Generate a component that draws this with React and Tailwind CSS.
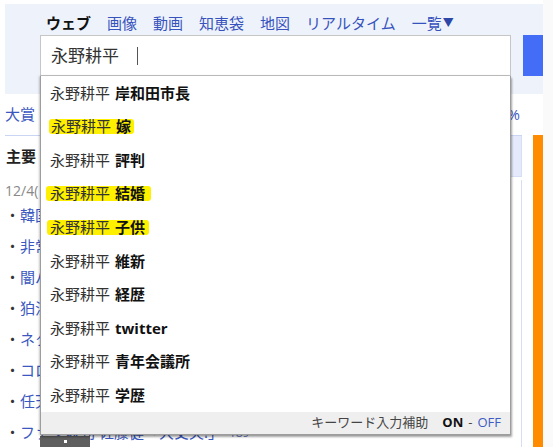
import React from "react";

const items = [
  { s: "岸和田市長" },
  { s: "嫁", hl: true, hlc: "-ml-[1px] pl-[2px] pr-[3px]" },
  { s: "評判" },
  { s: "結婚", hl: true, hlc: "-ml-[4px] pl-[4px] pr-[6px]" },
  { s: "子供", hl: true, hlc: "-ml-[3px] pl-[3px] pr-[4px]" },
  { s: "維新" },
  { s: "経歴" },
  { s: "twitter" },
  { s: "青年会議所" },
  { s: "学歴" },
];

const news = ["韓国", "非常", "闇バ", "狛江", "ネク", "コロ", "任天"];

function Row({ it }) {
  const content = (
    <>
      <span className="text-[#333]">永野耕平</span>
      <span className="ml-[5px] font-bold text-[#111]">{it.s}</span>
    </>
  );
  return (
    <div className="flex h-[33.6px] items-center pl-[9px] text-[15px]">
      {it.hl ? (
        <span className={`inline-flex h-[15px] items-center rounded-[3px] bg-[#fff000] leading-[15px] ${it.hlc}`}>{content}</span>
      ) : (
        content
      )}
    </div>
  );
}

export default function App() {
  return (
    <div className="relative h-[447px] w-[553px] overflow-hidden bg-white font-['Open_Sans','Noto_Sans_CJK_JP',sans-serif]">
      <div className="flex h-full">
        <div className="w-[5px] shrink-0 bg-white" />
        <div className="flex w-[538px] shrink-0 flex-col">
          <div className="h-[4px] shrink-0 bg-white" />
          {/* header */}
          <div className="h-[90px] shrink-0 bg-[#eef2fb] pt-[9px]">
            <div className="flex h-[20px] items-center gap-[16px] pl-[41px] text-[15px] leading-[20px] text-[#3653bd]">
              <span className="font-bold text-[#111]">ウェブ</span>
              <span>画像</span>
              <span>動画</span>
              <span>知恵袋</span>
              <span>地図</span>
              <span>リアルタイム</span>
              <span className="flex items-center">一覧<span className="ml-[1px] text-[11px] text-[#2c47a8]">▼</span></span>
            </div>
            <div className="mt-[2px] flex">
              <div className="ml-[35px] flex h-[41px] w-[471px] items-center border border-[#c6c6c6] bg-white pl-[10px] text-[17px] text-[#333]">
                <span>永野耕平</span>
                <span className="ml-[18px] h-[18px] w-[1px] bg-[#555]" />
              </div>
              <div className="ml-[12px] h-[41px] w-[20px] bg-[#436cf7]" />
            </div>
          </div>
          {/* body */}
          <div className="flex shrink-0">
            <div className="w-[517px] shrink-0">
              <div className="flex h-[41px] items-center justify-between pr-[2px] text-[15px] text-[#3b57c0]">
                <span>大賞</span>
                <span>%</span>
              </div>
              <div className="flex h-[42px] border-t border-[#c9d5f2]">
                <div className="flex w-[60px] items-center pl-[1px] text-[15px] font-bold text-[#222]">主要</div>
                <div className="flex-1 border-r border-b border-[#d5def5] bg-[#e4eafb]" />
              </div>
              <div className="border-r border-[#d5def5]">
                <div className="mt-[3px] flex h-[20px] items-center text-[14px] text-[#888]">12/4(</div>
                {news.map((n) => (
                  <div key={n} className="flex h-[31px] items-center text-[15px] text-[#3b57c0]">
                    <span className="text-[#333]">・</span>
                    <span>{n}</span>
                  </div>
                ))}
                <div className="flex h-[31px] items-center whitespace-nowrap text-[15px] text-[#3b57c0]">
                  <span className="text-[#333]">・</span>
                  <span>ファン殺到 佐藤健「大丈夫!」</span>
                  <span className="ml-[6px] text-[12px] text-[#6a7fc8]">189</span>
                </div>
              </div>
            </div>
            <div className="w-[11px] shrink-0" />
            <div className="mt-[41px] h-[400px] w-[10px] shrink-0 bg-[#ff8c00]" />
          </div>
        </div>
        <div className="w-[10px] shrink-0 bg-[#fafafa]" />
      </div>

      {/* page-top button peeking under dropdown */}
      <div className="absolute left-[40px] top-[436px] flex h-[12px] w-[50px] justify-center bg-[#5f5f5f]">
        <div className="mt-[4px] h-[3px] w-[3px] bg-white" />
      </div>

      {/* suggestion dropdown */}
      <div className="absolute left-[40px] top-[76px] w-[471px] border-x border-b border-[#9d9d9d] bg-white shadow-[1px_2px_2px_rgba(0,0,0,0.35),-1px_0_2px_rgba(0,0,0,0.2)]">
        {items.map((it) => (
          <Row key={it.s} it={it} />
        ))}
        <div className="flex h-[22px] items-center justify-end bg-[#efefef] pr-[9px] text-[13px]">
          <span className="text-[#444]">キーワード入力補助</span>
          <span className="ml-[14px] font-bold text-[#111]">ON</span>
          <span className="mx-[5px] text-[#444]">-</span>
          <span className="text-[#3d5cc4]">OFF</span>
        </div>
      </div>
    </div>
  );
}
